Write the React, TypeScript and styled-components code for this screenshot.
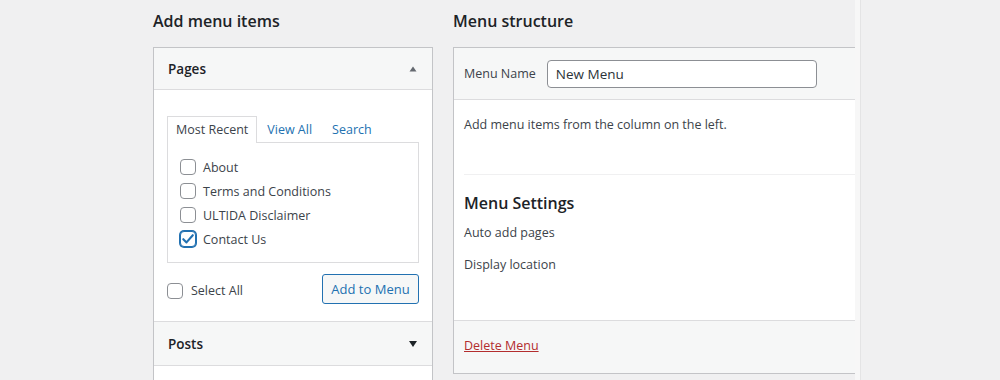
import React from "react";
import styled, { createGlobalStyle } from "styled-components";

const GlobalStyle = createGlobalStyle`
  body {
    margin: 0;
    background: #f0f0f1;
    font-family: "Open Sans", "Noto Sans", sans-serif;
    font-size: 12.5px;
    color: #3c434a;
  }
`;

const Page = styled.div`
  display: flex;
  align-items: flex-start;
  padding-left: 153px;
  height: 380px;
  overflow: hidden;
`;

const LeftColumn = styled.div`
  width: 280px;
  flex-shrink: 0;
`;

const RightColumn = styled.div`
  width: 402px;
  margin-left: 20px;
  flex-shrink: 0;
  overflow: hidden;
`;

const Gutter = styled.div`
  width: 5px;
  height: 380px;
  background: #f7f7f7;
  border-right: 1px solid #e4e4e5;
  flex-shrink: 0;
`;

const Heading = styled.h2`
  margin: 0;
  padding-top: 9px;
  height: 47px;
  box-sizing: border-box;
  font-size: 16px;
  font-weight: 600;
  color: #1d2327;
  line-height: 24px;
  white-space: nowrap;
`;

const Box = styled.div<{ $wide?: boolean }>`
  border: 1px solid #c3c4c7;
  background: #fff;
  width: ${p => (p.$wide ? "460px" : "auto")};
`;

const SectionHeader = styled.div<{ $height: number }>`
  display: flex;
  align-items: center;
  justify-content: space-between;
  height: ${p => p.$height}px;
  padding: 0 14px 0 14px;
  background: #f6f7f7;
  border-bottom: 1px solid #dcdcde;
  font-size: 13.5px;
  font-weight: 600;
  color: #1d2327;
`;

const PagesBody = styled.div`
  padding: 25px 13px 17px 13px;
  border-bottom: 1px solid #dcdcde;
`;

const Tabs = styled.div`
  display: flex;
  align-items: flex-end;
  height: 27px;
`;

const Tab = styled.div<{ $active?: boolean }>`
  height: 27px;
  box-sizing: border-box;
  display: flex;
  align-items: center;
  padding: ${p => (p.$active ? "0 8px 2px" : "0 9px 2px")};
  border: ${p => (p.$active ? "1px solid #dcdcde" : "1px solid transparent")};
  border-bottom: none;
  color: ${p => (p.$active ? "#3c434a" : "#2271b1")};
  background: ${p => (p.$active ? "#fff" : "transparent")};
  margin-bottom: -1px;
  position: relative;
  z-index: 1;
`;

const ListBox = styled.div`
  border: 1px solid #dcdcde;
  padding: 12px 12px 11px 12px;
`;

const Item = styled.label`
  display: flex;
  align-items: center;
  gap: 7px;
  height: 24px;
  white-space: nowrap;
`;

const Check = styled.span<{ $checked?: boolean }>`
  width: 16px;
  height: 16px;
  box-sizing: border-box;
  border: 1px solid ${p => (p.$checked ? "#2271b1" : "#8c8f94")};
  box-shadow: ${p => (p.$checked ? "0 0 0 1px #2271b1" : "none")};
  border-radius: 4px;
  background: #fff;
  display: flex;
  align-items: center;
  justify-content: center;
  flex-shrink: 0;
`;

const Actions = styled.div`
  display: flex;
  align-items: center;
  justify-content: space-between;
  margin-top: 11px;
`;

const SelectAll = styled(Item)`
  gap: 8px;
  margin-top: 3px;
`;

const Button = styled.button`
  height: 30px;
  width: 97px;
  border: 1px solid #2271b1;
  border-radius: 3px;
  background: #f6f7f7;
  color: #2271b1;
  font-family: inherit;
  font-size: 13px;
  padding: 0;
`;

const Filler = styled.div`
  height: 30px;
`;

const NameBar = styled.div`
  display: flex;
  align-items: center;
  gap: 11px;
  height: 51px;
  padding: 0 10px;
  background: #f6f7f7;
  border-bottom: 1px solid #dcdcde;
`;

const NameInput = styled.div`
  width: 270px;
  height: 28px;
  box-sizing: border-box;
  border: 1px solid #8c8f94;
  border-radius: 4px;
  background: #fff;
  display: flex;
  align-items: center;
  padding-left: 8px;
  font-size: 13.5px;
  color: #2c3338;
`;

const MenuBody = styled.div`
  padding: 0 0 0 10px;
  height: 220px;
  box-sizing: border-box;
`;

const Hint = styled.p`
  margin: 0;
  height: 75px;
  padding-top: 16px;
  box-sizing: border-box;
  border-bottom: 1px solid #f0f0f1;
`;

const SubHeading = styled.h3`
  margin: 0;
  padding-top: 17px;
  font-size: 16px;
  font-weight: 600;
  color: #1d2327;
  line-height: 22px;
`;

const SettingLine = styled.div<{ $top: number }>`
  margin-top: ${p => p.$top}px;
  line-height: 18px;
`;

const Footer = styled.div`
  height: 52px;
  padding-left: 10px;
  display: flex;
  align-items: center;
  background: #f6f7f7;
  border-top: 1px solid #dcdcde;
`;

const DeleteLink = styled.a`
  color: #b32d2e;
  text-decoration: underline;
  margin-bottom: 3px;
`;

const Triangle = ({ up }: { up?: boolean }) => (
  <svg width="10" height="8" viewBox="0 0 10 8">
    <path
      d={up ? "M1.5 6.5 L5 1.5 L8.5 6.5 Z" : "M1 1 L9 1 L5 7 Z"}
      fill={up ? "#646970" : "#1d2327"}
    />
  </svg>
);

const CheckMark = () => (
  <svg width="14" height="14" viewBox="0 0 14 14">
    <path d="M2.3 7.2 L5.5 10.4 L11.8 3.2" fill="none" stroke="#2271b1" strokeWidth="2.1" strokeLinecap="round" strokeLinejoin="round" />
  </svg>
);

const pages = [
  { title: "About", checked: false },
  { title: "Terms and Conditions", checked: false },
  { title: "ULTIDA Disclaimer", checked: false },
  { title: "Contact Us", checked: true }
];

export default function App() {
  return (
    <>
      <GlobalStyle />
      <Page>
        <LeftColumn>
          <Heading>Add menu items</Heading>
          <Box>
            <SectionHeader $height={41}>
              Pages
              <Triangle up />
            </SectionHeader>
            <PagesBody>
              <Tabs>
                <Tab $active>Most Recent</Tab>
                <Tab>View All</Tab>
                <Tab>Search</Tab>
              </Tabs>
              <ListBox>
                {pages.map(p => (
                  <Item key={p.title}>
                    <Check $checked={p.checked}>{p.checked && <CheckMark />}</Check>
                    {p.title}
                  </Item>
                ))}
              </ListBox>
              <Actions>
                <SelectAll>
                  <Check />
                  Select All
                </SelectAll>
                <Button>Add to Menu</Button>
              </Actions>
            </PagesBody>
            <SectionHeader $height={43}>
              Posts
              <Triangle />
            </SectionHeader>
            <Filler />
          </Box>
        </LeftColumn>
        <RightColumn>
          <Heading>Menu structure</Heading>
          <Box $wide>
            <NameBar>
              Menu Name
              <NameInput>New Menu</NameInput>
            </NameBar>
            <MenuBody>
              <Hint>Add menu items from the column on the left.</Hint>
              <SubHeading>Menu Settings</SubHeading>
              <SettingLine $top={10}>Auto add pages</SettingLine>
              <SettingLine $top={14}>Display location</SettingLine>
            </MenuBody>
            <Footer>
              <DeleteLink href="#">Delete Menu</DeleteLink>
            </Footer>
          </Box>
        </RightColumn>
        <Gutter />
      </Page>
    </>
  );
}
